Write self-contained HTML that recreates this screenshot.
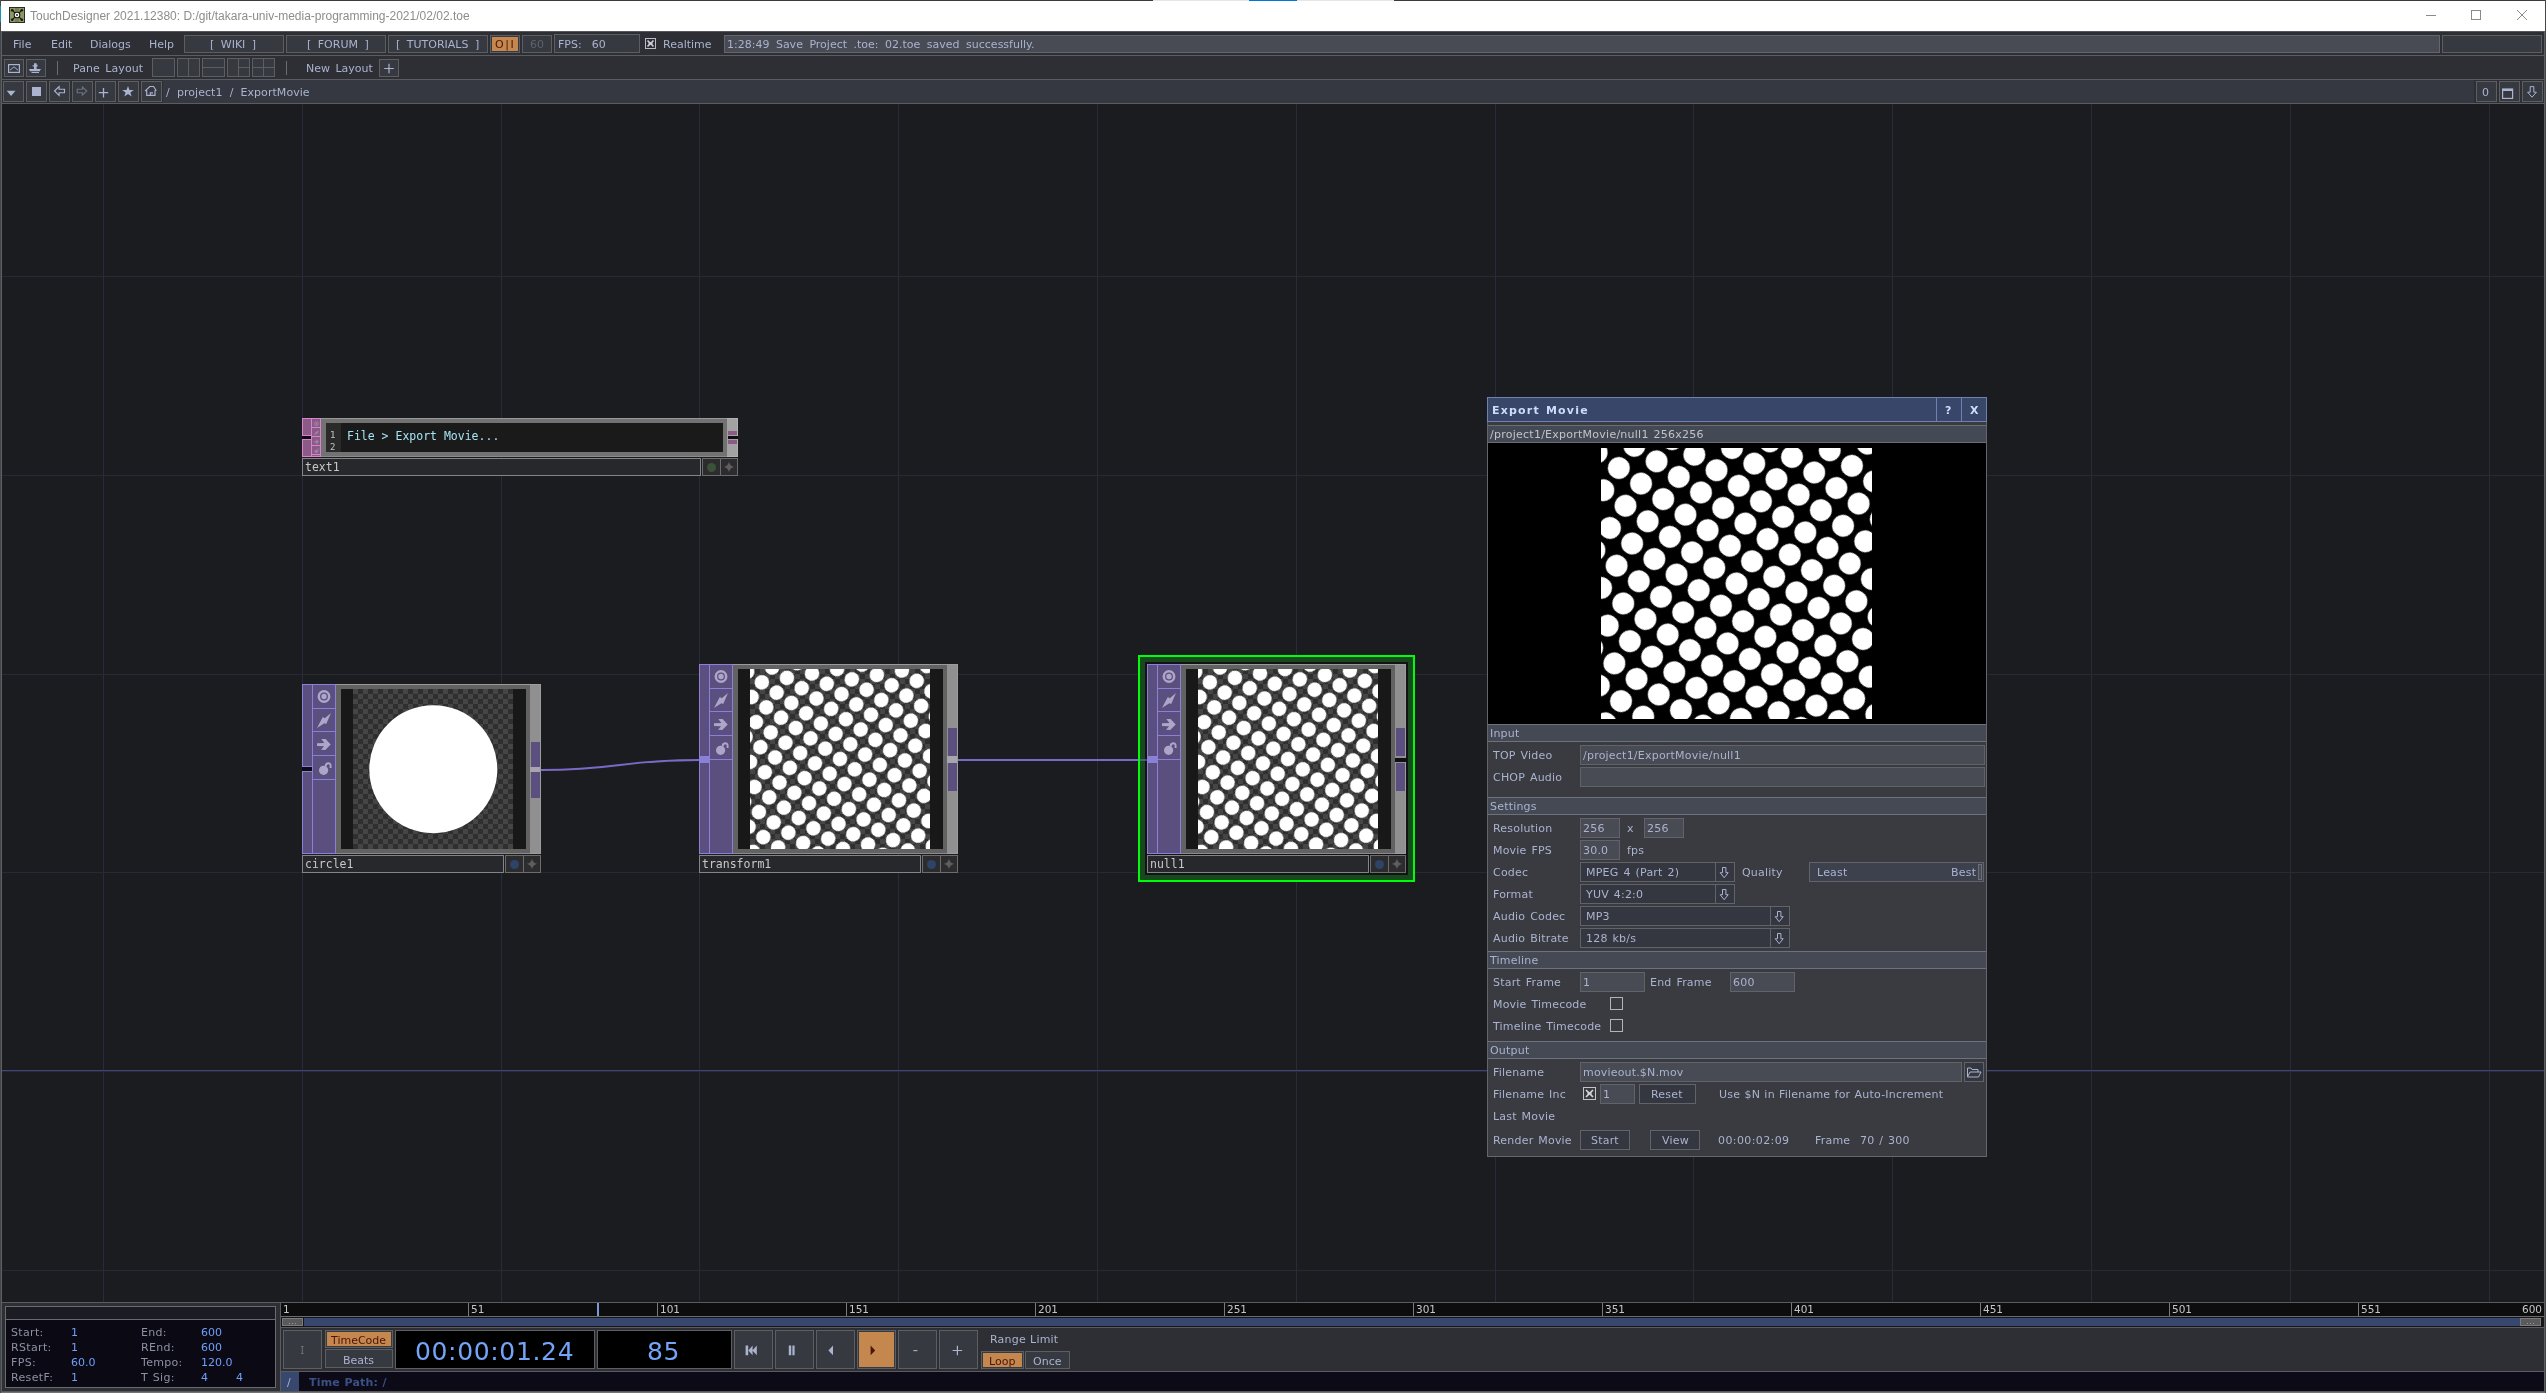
<!DOCTYPE html>
<html>
<head>
<meta charset="utf-8">
<title>TouchDesigner</title>
<style>
*{box-sizing:border-box;margin:0;padding:0}
html,body{width:2546px;height:1393px;overflow:hidden;background:#1b1c20}
body{position:relative;font-family:"DejaVu Sans","Liberation Sans",sans-serif;font-size:11px;line-height:13px;color:#aab3cf;word-spacing:3px}
.a{position:absolute}
.t{position:absolute;white-space:pre;height:13px}
.b{position:absolute;border:1px solid #5d5e61;background:#373941}
.hl{position:absolute;height:1px;left:1px;width:2544px;background:#5a5c61}
svg{position:absolute;overflow:visible}
.mono{font-family:"DejaVu Sans Mono","Liberation Mono",monospace;word-spacing:0}
</style>
</head>
<body>
<div id="root" style="position:absolute;left:0;top:0;width:2546px;height:1393px;will-change:transform">
<!-- ===== window frame / title bar ===== -->
<div class="a" id="titlebar" style="left:0;top:0;width:2546px;height:31px;background:#fff"></div>
<div class="a" style="left:0;top:0;width:2546px;height:1px;background:#3b3b3b"></div>
<div class="a" style="left:1153px;top:0;width:241px;height:1px;background:#e6e6e6"></div>
<div class="a" style="left:1249px;top:0;width:48px;height:1px;background:#0078d7"></div>
<div class="a" style="left:0;top:0;width:1px;height:1393px;background:#454746"></div>
<div class="a" style="left:2545px;top:0;width:1px;height:1393px;background:#454746"></div>
<div class="a" style="left:0;top:6px;width:1px;height:16px;background:#1d90b0"></div>
<div class="t" style="left:30px;top:9px;height:15px;line-height:15px;font-family:'Liberation Sans',sans-serif;font-size:12px;color:#8d8d8d;word-spacing:0">TouchDesigner 2021.12380: D:/git/takara-univ-media-programming-2021/02/02.toe</div>
<!-- app icon -->
<svg style="left:9px;top:7px" width="16" height="16" viewBox="0 0 16 16">
<rect x="0" y="0" width="16" height="16" fill="#8c9962"/>
<rect x="6" y="0" width="4" height="16" fill="#73804f"/>
<rect x="0.5" y="0.5" width="15" height="15" fill="none" stroke="#2a2a2a"/>
<path d="M3.2 3.2L12.8 12.8M12.8 3.2L3.2 12.8" stroke="#151515" stroke-width="1.2"/>
<circle cx="3.2" cy="3.2" r="1.3" fill="#151515"/><circle cx="12.8" cy="3.2" r="1.3" fill="#151515"/><circle cx="3.2" cy="12.8" r="1.3" fill="#151515"/><circle cx="12.8" cy="12.8" r="1.3" fill="#151515"/>
<circle cx="8" cy="8" r="3.3" fill="#151515"/><circle cx="8" cy="8" r="2.3" fill="#fff"/><circle cx="8" cy="8" r="0.9" fill="#151515"/>
</svg>
<!-- window controls -->
<svg style="left:2420px;top:5px" width="115" height="22" viewBox="0 0 115 22">
<path d="M6 10.5H16" stroke="#8a8a8a" stroke-width="1" fill="none"/>
<rect x="51.5" y="5.5" width="9" height="9" stroke="#8a8a8a" stroke-width="1" fill="none"/>
<path d="M97 5L107 15M107 5L97 15" stroke="#8a8a8a" stroke-width="1" fill="none"/>
</svg>

<!-- ===== menu bar ===== -->
<div class="a" id="appbg" style="left:1px;top:31px;width:2544px;height:73px;background:#2e2f34"></div>
<div class="a" style="left:1px;top:31px;width:2544px;height:1px;background:#54585e"></div>
<div class="a" style="left:1px;top:31px;width:1px;height:1362px;background:#5c5f66"></div>
<div class="a" style="left:2544px;top:31px;width:1px;height:1362px;background:#5c5f66"></div>
<div class="hl" style="top:55px"></div>
<div class="hl" style="top:79px"></div>
<div class="hl" style="top:103px"></div>
<!--MENUBAR-->
<div class="t" style="left:13px;top:38px">File</div>
<div class="t" style="left:51px;top:38px">Edit</div>
<div class="t" style="left:90px;top:38px">Dialogs</div>
<div class="t" style="left:149px;top:38px">Help</div>
<div class="b" style="left:184px;top:35px;width:100px;height:18px"></div>
<div class="b" style="left:286px;top:35px;width:100px;height:18px"></div>
<div class="b" style="left:388px;top:35px;width:100px;height:18px"></div>
<div class="t" style="left:210px;top:38px">[ WIKI ]</div>
<div class="t" style="left:307px;top:38px">[ FORUM ]</div>
<div class="t" style="left:396px;top:38px">[ TUTORIALS ]</div>
<div class="b" style="left:490px;top:35px;width:30px;height:18px"></div>
<div class="a" style="left:492px;top:37px;width:26px;height:14px;background:#c4874e"></div>
<div class="t" style="left:495px;top:38px;color:#4a1408;word-spacing:0;letter-spacing:1.6px">O|I</div>
<div class="b" style="left:522px;top:35px;width:30px;height:18px"></div>
<div class="t" style="left:530px;top:38px;color:#5f626c">60</div>
<div class="b" style="left:554px;top:34px;width:86px;height:19px"></div>
<div class="t" style="left:558px;top:38px;word-spacing:6.5px">FPS: 60</div>
<div class="a" style="left:645px;top:38px;width:11px;height:11px;border:1px solid #b9bcc4;background:#2e2f34"></div>
<svg style="left:645px;top:38px" width="11" height="11" viewBox="0 0 11 11"><path d="M2.5 2.5L8.5 8.5M8.5 2.5L2.5 8.5" stroke="#c9ccd6" stroke-width="1.6" fill="none"/><rect x="3.5" y="4" width="4" height="3" fill="#c9ccd6"/></svg>
<div class="t" style="left:663px;top:38px">Realtime</div>
<div class="b" style="left:724px;top:35px;width:1716px;height:18px;background:#484b54;border-color:#63666d"></div>
<div class="t" style="left:727px;top:38px">1:28:49 Save Project .toe: 02.toe saved successfully.</div>
<div class="b" style="left:2442px;top:35px;width:100px;height:18px"></div>
<!--/MENUBAR-->
<!--TOOLBAR-->
<div class="b" style="left:4px;top:59px;width:20px;height:18px"></div>
<div class="b" style="left:26px;top:59px;width:20px;height:18px"></div>
<svg style="left:4px;top:59px" width="42" height="18" viewBox="4 59 42 18" fill="none" stroke="#aab3cf">
<rect x="8.6" y="64.6" width="10.8" height="7.8" stroke-width="1.2"/>
<path d="M10 70.2L14 66.8L18 70.2" stroke-width="1"/>
<path d="M29 69h12l-1.5 2.2h-9.5z" fill="#aab3cf" stroke="none"/>
<path d="M34 63.2h2.6v1.6h1v1.6h-1v2.6h-2.6v-2.6h-1.4v-1.2h1.4z" fill="#aab3cf" stroke="none"/>
<path d="M31.5 72h7.5v1h-7.5z" fill="#aab3cf" stroke="none"/>
</svg>
<div class="a" style="left:57px;top:61px;width:1px;height:14px;background:#6a6c72"></div>
<div class="t" style="left:73px;top:62px;word-spacing:2px;letter-spacing:.05px">Pane Layout</div>
<div class="b" style="left:152px;top:58px;width:23px;height:19px"></div>
<div class="b" style="left:177px;top:58px;width:23px;height:19px"></div>
<div class="b" style="left:202px;top:58px;width:23px;height:19px"></div>
<div class="b" style="left:227px;top:58px;width:23px;height:19px"></div>
<div class="b" style="left:252px;top:58px;width:23px;height:19px"></div>
<div class="a" style="left:188px;top:59px;width:1px;height:17px;background:#5d5e61"></div>
<div class="a" style="left:203px;top:67px;width:21px;height:1px;background:#5d5e61"></div>
<div class="a" style="left:238px;top:59px;width:1px;height:17px;background:#5d5e61"></div>
<div class="a" style="left:239px;top:67px;width:10px;height:1px;background:#5d5e61"></div>
<div class="a" style="left:263px;top:59px;width:1px;height:17px;background:#5d5e61"></div>
<div class="a" style="left:253px;top:67px;width:21px;height:1px;background:#5d5e61"></div>
<div class="a" style="left:286px;top:61px;width:1px;height:14px;background:#6a6c72"></div>
<div class="t" style="left:306px;top:62px;word-spacing:2px">New Layout</div>
<div class="b" style="left:379px;top:59px;width:20px;height:18px"></div>
<svg style="left:379px;top:59px" width="20" height="18" viewBox="0 0 20 18"><path d="M5.2 9.5h9.6M10 4.7v9.6" stroke="#aab3cf" stroke-width="1.2" fill="none"/></svg>
<!--/TOOLBAR-->
<!--PATHBAR-->
<div class="a" style="left:163px;top:80px;width:2311px;height:23px;background:#353840"></div>
<div class="b" style="left:3px;top:81px;width:21px;height:21px"></div>
<div class="b" style="left:26px;top:81px;width:21px;height:21px"></div>
<div class="b" style="left:49px;top:81px;width:21px;height:21px"></div>
<div class="b" style="left:72px;top:81px;width:21px;height:21px"></div>
<div class="b" style="left:95px;top:81px;width:21px;height:21px"></div>
<div class="b" style="left:118px;top:81px;width:21px;height:21px"></div>
<div class="b" style="left:141px;top:81px;width:21px;height:21px"></div>
<svg style="left:3px;top:81px" width="160" height="21" viewBox="3 81 160 21" fill="none" stroke="#aab3cf" stroke-width="1.1">
<path d="M6.7 90.8h8.8l-4.4 5.3z" fill="#aab3cf" stroke="none"/>
<rect x="32" y="87" width="9" height="9" fill="#aab3cf" stroke="none"/>
<path d="M54.5 91l4.6-4.4v2.6h5.4v3.6h-5.4v2.6z"/>
<path d="M86.8 91l-4.4-4v2.3h-5.2v3.4h5.2v2.3z" stroke="#6d727f"/>
<path d="M98.8 92.6h9.4M103.5 88v9.6" stroke-width="1.3"/>
<path d="M128 86l1.5 3.9h4.3l-3.4 2.6 1.3 4.1-3.7-2.5-3.7 2.5 1.3-4.1-3.4-2.6h4.3z" fill="#aab3cf" stroke="none"/>
<path d="M145 91.2L149.8 86.5H153.6L156.3 90.8M146.7 90.2V95.4H155V90.2M150.3 95.4V92.9H153" stroke-width="1.15"/>
</svg>
<div class="t" style="left:166px;top:86px;word-spacing:3.6px;letter-spacing:.05px">/ project1 / ExportMovie</div>
<div class="b" style="left:2476px;top:81px;width:21px;height:21px"></div>
<div class="b" style="left:2499px;top:81px;width:21px;height:21px"></div>
<div class="b" style="left:2522px;top:81px;width:21px;height:21px"></div>
<div class="t" style="left:2482px;top:86px">0</div>
<svg style="left:2499px;top:81px" width="44" height="21" viewBox="2499 81 44 21" fill="none" stroke="#aab3cf" stroke-width="1.2">
<rect x="2502.6" y="89" width="10" height="9.4"/><path d="M2502.6 90h10" stroke-width="2"/>
<path d="M2530.2 86.6h3.6v5.6h2.6l-4.4 5-4.4-5h2.6z" stroke-width="1"/>
</svg>
<!--/PATHBAR-->
<!--NETWORK-->
<div class="a" id="net" style="left:2px;top:104px;width:2542px;height:1198px;background:#1b1c20;overflow:hidden"></div>
<div class="a" style="left:103px;top:104px;width:1px;height:1198px;background:#2a2b39"></div>
<div class="a" style="left:302px;top:104px;width:1px;height:1198px;background:#2a2b39"></div>
<div class="a" style="left:501px;top:104px;width:1px;height:1198px;background:#2a2b39"></div>
<div class="a" style="left:699px;top:104px;width:1px;height:1198px;background:#2a2b39"></div>
<div class="a" style="left:898px;top:104px;width:1px;height:1198px;background:#2a2b39"></div>
<div class="a" style="left:1097px;top:104px;width:1px;height:1198px;background:#2a2b39"></div>
<div class="a" style="left:1296px;top:104px;width:1px;height:1198px;background:#2a2b39"></div>
<div class="a" style="left:1495px;top:104px;width:1px;height:1198px;background:#2a2b39"></div>
<div class="a" style="left:1693px;top:104px;width:1px;height:1198px;background:#2a2b39"></div>
<div class="a" style="left:1892px;top:104px;width:1px;height:1198px;background:#2a2b39"></div>
<div class="a" style="left:2091px;top:104px;width:1px;height:1198px;background:#2a2b39"></div>
<div class="a" style="left:2290px;top:104px;width:1px;height:1198px;background:#2a2b39"></div>
<div class="a" style="left:2489px;top:104px;width:1px;height:1198px;background:#2a2b39"></div>
<div class="a" style="left:2px;top:276px;width:2542px;height:1px;background:#272a34"></div>
<div class="a" style="left:2px;top:475px;width:2542px;height:1px;background:#272a34"></div>
<div class="a" style="left:2px;top:674px;width:2542px;height:1px;background:#272a34"></div>
<div class="a" style="left:2px;top:872px;width:2542px;height:1px;background:#272a34"></div>
<div class="a" style="left:2px;top:1071px;width:2542px;height:1px;background:#272a34"></div>
<div class="a" style="left:2px;top:1270px;width:2542px;height:1px;background:#272a34"></div>
<div class="a" style="left:2px;top:1070px;width:2542px;height:1px;background:#40447c"></div>
<svg width="0" height="0" style="left:0;top:0"><defs>
<pattern id="chk" width="10" height="10" patternUnits="userSpaceOnUse"><rect width="10" height="10" fill="#2f2f2f"/><rect width="5" height="5" fill="#454545"/><rect x="5" y="5" width="5" height="5" fill="#454545"/></pattern>
<pattern id="dots" width="27.1" height="27.1" patternUnits="userSpaceOnUse" patternTransform="translate(135.5 135.5) rotate(35) translate(-13.55 -13.55)"><circle cx="13.55" cy="13.55" r="10.95" fill="#fff"/></pattern>
<g id="ic" fill="#aea6c8">
<circle cx="12" cy="12.5" r="5.2" fill="none" stroke="#aea6c8" stroke-width="2.5"/><circle cx="12" cy="12.5" r="2.7"/>
<path d="M19 29L14.2 40L12.3 39.2L5 43.9L10.8 33L12.8 34.3Z"/>
<path d="M9.3 54.9L13.6 55.1L18.7 60.5L13.3 66.1L9 65.8L12.1 62.3L5 62V59.2L12.4 58.9Z"/>
<circle cx="11.6" cy="86.3" r="4.6"/><path d="M13.6 82.5C13.6 78.6 18.6 78.2 18.6 81.6V84" fill="none" stroke="#aea6c8" stroke-width="1.9"/>
</g>
<g id="spark"><path d="M0 -5.2C.9 -2 2 -.9 5.2 0C2 .9 .9 2 0 5.2C-.9 2 -2 .9 -5.2 0C-2 -.9 -.9 -2 0 -5.2Z" fill="#5e5e5e"/></g>
</defs></svg>
<svg style="left:0;top:0" width="2546" height="1393" fill="none" stroke="#7a69c6" stroke-width="1.8"><path d="M541 770C620 770 620 760 699 760"/><path d="M958 760H1147"/></svg>
<div class="a" style="left:302px;top:418px;width:19px;height:39px;background:#8b5a86;border:1px solid #d884cc"></div>
<div class="a" style="left:311px;top:418px;width:1px;height:39px;background:#d884cc"></div>
<div class="a" style="left:311px;top:427px;width:10px;height:1px;background:#d884cc"></div>
<div class="a" style="left:311px;top:436px;width:10px;height:1px;background:#d884cc"></div>
<div class="a" style="left:311px;top:445px;width:10px;height:1px;background:#d884cc"></div>
<div class="a" style="left:311px;top:454px;width:10px;height:1px;background:#d884cc"></div>
<div class="a" style="left:302px;top:435px;width:9px;height:5px;background:#0c0c10;border-top:1px solid #d884cc;border-bottom:1px solid #d884cc"></div>
<svg style="left:312px;top:419px" width="9" height="36" viewBox="0 0 24 96"><use href="#ic" opacity=".55"/></svg>
<div class="a" style="left:321px;top:418px;width:406px;height:39px;background:#727272;border-top:1px solid #989898;border-bottom:1px solid #8a8a8a"></div>
<div class="a" style="left:326px;top:423px;width:397px;height:29px;background:#1a1a1a"></div>
<div class="a" style="left:326px;top:423px;width:15px;height:29px;background:#2a2a2a"></div>
<div class="t mono" style="left:330px;top:429px;font-size:9px;line-height:12px;color:#c4c4c4">1</div>
<div class="t mono" style="left:330px;top:441px;font-size:9px;line-height:12px;color:#c4c4c4">2</div>
<div class="t mono" style="left:347px;top:429px;font-size:11.5px;line-height:14px;height:14px;color:#a4e4f4">File &gt; Export Movie...</div>
<div class="a" style="left:727px;top:418px;width:11px;height:39px;background:#a2a2a2;border:1px solid #b0b0b0;border-left:none"></div>
<div class="a" style="left:728px;top:431px;width:9px;height:4px;background:#8b5a86"></div>
<div class="a" style="left:728px;top:440px;width:9px;height:4px;background:#8b5a86"></div>
<div class="a" style="left:728px;top:436px;width:10px;height:3px;background:#101014"></div>
<div class="a" style="left:302px;top:458px;width:399px;height:18px;background:#27282b;border:1px solid #828489"></div>
<div class="a" style="left:702px;top:458px;width:19px;height:18px;background:#2c2c2e;border:1px solid #6c6c6c"></div>
<div class="a" style="left:720px;top:458px;width:18px;height:18px;background:#2c2c2e;border:1px solid #6c6c6c"></div>
<div class="a" style="left:707px;top:463px;width:9px;height:9px;border-radius:50%;background:#3b5238"></div>
<svg style="left:729px;top:467px" width="1" height="1"><use href="#spark"/></svg>
<div class="t mono" style="left:305px;top:460px;font-size:11.5px;color:#c8c8c8;line-height:14px;height:14px">text1</div>
<div class="a" style="left:302px;top:684px;width:34px;height:170px;background:#5a4f7e;border:1px solid #8b80d8"></div>
<div class="a" style="left:312px;top:684px;width:1px;height:170px;background:#8b80d8"></div>
<div class="a" style="left:312px;top:708px;width:24px;height:1px;background:#8b80d8"></div>
<div class="a" style="left:312px;top:731px;width:24px;height:1px;background:#8b80d8"></div>
<div class="a" style="left:312px;top:755px;width:24px;height:1px;background:#8b80d8"></div>
<div class="a" style="left:312px;top:779px;width:24px;height:1px;background:#8b80d8"></div>
<div class="a" style="left:302px;top:766px;width:10px;height:6px;background:#0c0c10;border-top:1px solid #8b80d8;border-bottom:1px solid #8b80d8"></div>
<svg style="left:312px;top:684px" width="24" height="96" viewBox="0 0 24 96"><use href="#ic"/></svg>
<div class="a" style="left:336px;top:684px;width:194px;height:170px;background:#626262;border-top:1px solid #9a9a9a;border-bottom:1px solid #8a8a8a"></div>
<div class="a" style="left:341px;top:689px;width:185px;height:160px;background:#181818"></div>
<svg style="left:353px;top:689px" width="160" height="160"><rect width="160" height="160" fill="url(#chk)"/><circle cx="80.3" cy="80.2" r="64"  fill="#fff"/></svg>
<div class="a" style="left:530px;top:684px;width:11px;height:170px;background:#909090;border:1px solid #9c9c9c;border-left:none"></div>
<div class="a" style="left:531px;top:742px;width:9px;height:25px;background:#5a4f7e"></div>
<div class="a" style="left:531px;top:772px;width:9px;height:26px;background:#5a4f7e"></div>
<div class="a" style="left:530px;top:767px;width:10px;height:5px;background:#a6a6ac"></div>
<div class="a" style="left:302px;top:855px;width:202px;height:18px;background:#27282b;border:1px solid #828489"></div>
<div class="a" style="left:505px;top:855px;width:19px;height:18px;background:#2c2c2e;border:1px solid #6c6c6c"></div>
<div class="a" style="left:523px;top:855px;width:18px;height:18px;background:#2c2c2e;border:1px solid #6c6c6c"></div>
<div class="a" style="left:510px;top:860px;width:9px;height:9px;border-radius:50%;background:#2d4468"></div>
<svg style="left:532px;top:864px" width="1" height="1"><use href="#spark"/></svg>
<div class="t mono" style="left:305px;top:857px;font-size:11.5px;color:#c8c8c8;line-height:14px;height:14px">circle1</div>
<div class="a" style="left:699px;top:664px;width:34px;height:190px;background:#5a4f7e;border:1px solid #8b80d8"></div>
<div class="a" style="left:709px;top:664px;width:1px;height:190px;background:#8b80d8"></div>
<div class="a" style="left:709px;top:688px;width:24px;height:1px;background:#8b80d8"></div>
<div class="a" style="left:709px;top:711px;width:24px;height:1px;background:#8b80d8"></div>
<div class="a" style="left:709px;top:735px;width:24px;height:1px;background:#8b80d8"></div>
<div class="a" style="left:709px;top:759px;width:24px;height:1px;background:#8b80d8"></div>
<div class="a" style="left:699px;top:756px;width:10px;height:7px;background:#8b80d8"></div>
<svg style="left:709px;top:664px" width="24" height="96" viewBox="0 0 24 96"><use href="#ic"/></svg>
<div class="a" style="left:733px;top:664px;width:214px;height:190px;background:#626262;border-top:1px solid #9a9a9a;border-bottom:1px solid #8a8a8a"></div>
<div class="a" style="left:738px;top:669px;width:205px;height:180px;background:#181818"></div>
<svg style="left:750px;top:669px;overflow:hidden" width="180" height="180"><rect width="180" height="180" fill="url(#chk)"/><g transform="scale(0.66421)"><rect width="271" height="271" fill="url(#dots)"/></g></svg>
<div class="a" style="left:947px;top:664px;width:11px;height:190px;background:#909090;border:1px solid #9c9c9c;border-left:none"></div>
<div class="a" style="left:948px;top:728px;width:9px;height:28px;background:#5a4f7e"></div>
<div class="a" style="left:948px;top:763px;width:9px;height:28px;background:#5a4f7e"></div>
<div class="a" style="left:947px;top:756px;width:10px;height:7px;background:#a6a6ac"></div>
<div class="a" style="left:699px;top:855px;width:222px;height:18px;background:#27282b;border:1px solid #828489"></div>
<div class="a" style="left:922px;top:855px;width:19px;height:18px;background:#2c2c2e;border:1px solid #6c6c6c"></div>
<div class="a" style="left:940px;top:855px;width:18px;height:18px;background:#2c2c2e;border:1px solid #6c6c6c"></div>
<div class="a" style="left:927px;top:860px;width:9px;height:9px;border-radius:50%;background:#2d4468"></div>
<svg style="left:949px;top:864px" width="1" height="1"><use href="#spark"/></svg>
<div class="t mono" style="left:702px;top:857px;font-size:11.5px;color:#c8c8c8;line-height:14px;height:14px">transform1</div>
<div class="a" style="left:1138px;top:655px;width:277px;height:227px;background:#131315;border:2px solid #00fb0c;box-shadow:inset 0 0 0 5px #164a1c"></div>
<div class="a" style="left:1140px;top:759px;width:7px;height:2px;background:rgba(130,115,200,.55)"></div>
<div class="a" style="left:1147px;top:664px;width:34px;height:190px;background:#5a4f7e;border:1px solid #8b80d8"></div>
<div class="a" style="left:1157px;top:664px;width:1px;height:190px;background:#8b80d8"></div>
<div class="a" style="left:1157px;top:688px;width:24px;height:1px;background:#8b80d8"></div>
<div class="a" style="left:1157px;top:711px;width:24px;height:1px;background:#8b80d8"></div>
<div class="a" style="left:1157px;top:735px;width:24px;height:1px;background:#8b80d8"></div>
<div class="a" style="left:1157px;top:759px;width:24px;height:1px;background:#8b80d8"></div>
<div class="a" style="left:1147px;top:756px;width:10px;height:7px;background:#8b80d8"></div>
<svg style="left:1157px;top:664px" width="24" height="96" viewBox="0 0 24 96"><use href="#ic"/></svg>
<div class="a" style="left:1181px;top:664px;width:214px;height:190px;background:#626262;border-top:1px solid #9a9a9a;border-bottom:1px solid #8a8a8a"></div>
<div class="a" style="left:1186px;top:669px;width:205px;height:180px;background:#181818"></div>
<svg style="left:1198px;top:669px;overflow:hidden" width="180" height="180"><rect width="180" height="180" fill="url(#chk)"/><g transform="scale(0.66421)"><rect width="271" height="271" fill="url(#dots)"/></g></svg>
<div class="a" style="left:1395px;top:664px;width:11px;height:190px;background:#909090;border:1px solid #9c9c9c;border-left:none"></div>
<div class="a" style="left:1396px;top:728px;width:9px;height:28px;background:#5a4f7e"></div>
<div class="a" style="left:1396px;top:763px;width:9px;height:28px;background:#5a4f7e"></div>
<div class="a" style="left:1395px;top:758px;width:11px;height:4px;background:#101014"></div>
<div class="a" style="left:1147px;top:855px;width:222px;height:18px;background:#27282b;border:1px solid #828489"></div>
<div class="a" style="left:1370px;top:855px;width:19px;height:18px;background:#2c2c2e;border:1px solid #6c6c6c"></div>
<div class="a" style="left:1388px;top:855px;width:18px;height:18px;background:#2c2c2e;border:1px solid #6c6c6c"></div>
<div class="a" style="left:1375px;top:860px;width:9px;height:9px;border-radius:50%;background:#2d4468"></div>
<svg style="left:1397px;top:864px" width="1" height="1"><use href="#spark"/></svg>
<div class="t mono" style="left:1150px;top:857px;font-size:11.5px;color:#c8c8c8;line-height:14px;height:14px">null1</div>
<!--/NETWORK-->
<!--DIALOG-->
<div class="a" id="dlg" style="left:1487px;top:397px;width:500px;height:760px;background:#3a3b40;border:1px solid #63666c"></div>
<div class="a" style="left:1487px;top:397px;width:500px;height:25px;background:#374669;border:1px solid #6d82b3"></div>
<div class="a" style="left:1936px;top:398px;width:1px;height:23px;background:#6d82b3"></div>
<div class="a" style="left:1961px;top:398px;width:1px;height:23px;background:#6d82b3"></div>
<div class="t" style="left:1492px;top:404px;font-weight:bold;letter-spacing:1.2px;word-spacing:1px;color:#cfdcfa">Export Movie</div>
<div class="t" style="left:1945px;top:404px;font-weight:bold;color:#cfdcfa">?</div>
<div class="t" style="left:1970px;top:404px;font-weight:bold;color:#cfdcfa">X</div>
<div class="a" style="left:1488px;top:425px;width:498px;height:18px;background:#444a55;border-top:1px solid #6c6e73;border-bottom:1px solid #6c6e73"></div>
<div class="t" style="left:1490px;top:428px;letter-spacing:.2px;word-spacing:1.2px;letter-spacing:.25px;word-spacing:1px;color:#c2c3c8">/project1/ExportMovie/null1 256x256</div>
<div class="a" style="left:1488px;top:443px;width:498px;height:281px;background:#000"></div>
<svg style="left:1601px;top:448px" width="271" height="271"><rect width="271" height="271" fill="#000"/><rect width="271" height="271" fill="url(#dots)"/></svg>
<div class="a" style="left:1488px;top:724px;width:498px;height:18px;background:#444954;border-top:1px solid #6d717b;border-bottom:1px solid #6d717b"></div>
<div class="t" style="left:1490px;top:727px;letter-spacing:.2px;word-spacing:1.2px;">Input</div>
<div class="t" style="left:1493px;top:749px;letter-spacing:.2px;word-spacing:1.2px;">TOP Video</div>
<div class="b" style="left:1580px;top:745px;width:405px;height:20px;background:#484b54;border-color:#60636a"></div>
<div class="t" style="left:1583px;top:749px;letter-spacing:.2px;word-spacing:1.2px;letter-spacing:.22px">/project1/ExportMovie/null1</div>
<div class="t" style="left:1493px;top:771px;letter-spacing:.2px;word-spacing:1.2px;">CHOP Audio</div>
<div class="b" style="left:1580px;top:767px;width:405px;height:20px;background:#484b54;border-color:#60636a"></div>
<div class="a" style="left:1488px;top:797px;width:498px;height:18px;background:#444954;border-top:1px solid #6d717b;border-bottom:1px solid #6d717b"></div>
<div class="t" style="left:1490px;top:800px;letter-spacing:.2px;word-spacing:1.2px;">Settings</div>
<div class="t" style="left:1493px;top:822px;letter-spacing:.2px;word-spacing:1.2px;">Resolution</div>
<div class="b" style="left:1580px;top:818px;width:40px;height:20px;background:#484b54;border-color:#60636a"></div>
<div class="t" style="left:1583px;top:822px;letter-spacing:.2px;word-spacing:1.2px;">256</div>
<div class="t" style="left:1627px;top:822px;letter-spacing:.2px;word-spacing:1.2px;">x</div>
<div class="b" style="left:1644px;top:818px;width:40px;height:20px;background:#484b54;border-color:#60636a"></div>
<div class="t" style="left:1647px;top:822px;letter-spacing:.2px;word-spacing:1.2px;">256</div>
<div class="t" style="left:1493px;top:844px;letter-spacing:.2px;word-spacing:1.2px;">Movie FPS</div>
<div class="b" style="left:1580px;top:840px;width:40px;height:20px;background:#484b54;border-color:#60636a"></div>
<div class="t" style="left:1583px;top:844px;letter-spacing:.2px;word-spacing:1.2px;">30.0</div>
<div class="t" style="left:1627px;top:844px;letter-spacing:.2px;word-spacing:1.2px;">fps</div>
<div class="t" style="left:1493px;top:866px;letter-spacing:.2px;word-spacing:1.2px;">Codec</div>
<div class="b" style="left:1580px;top:862px;width:155px;height:20px;background:#353740;border-color:#60636a"></div>
<div class="a" style="left:1715px;top:863px;width:1px;height:18px;background:#60636a"></div>
<svg style="left:1715px;top:862px" width="19" height="20" viewBox="0 0 19 20"><path d="M7.5 5.5h3.4v5.2h2.3l-4 5-4-5h2.3z" fill="none" stroke="#aab3cf" stroke-width="1"/></svg>
<div class="t" style="left:1586px;top:866px;letter-spacing:.2px;word-spacing:1.2px;word-spacing:1.3px">MPEG 4 (Part 2)</div>
<div class="t" style="left:1742px;top:866px;letter-spacing:.2px;word-spacing:1.2px;">Quality</div>
<div class="b" style="left:1809px;top:862px;width:175px;height:20px;background:#3c414d;border-color:#60636a"></div>
<div class="t" style="left:1817px;top:866px;letter-spacing:.2px;word-spacing:1.2px;">Least</div>
<div class="t" style="left:1951px;top:866px;letter-spacing:.2px;word-spacing:1.2px;">Best</div>
<div class="a" style="left:1978px;top:864px;width:4px;height:16px;background:#4a4d57;border:1px solid #6c6f77"></div>
<div class="t" style="left:1493px;top:888px;letter-spacing:.2px;word-spacing:1.2px;">Format</div>
<div class="b" style="left:1580px;top:884px;width:155px;height:20px;background:#353740;border-color:#60636a"></div>
<div class="a" style="left:1715px;top:885px;width:1px;height:18px;background:#60636a"></div>
<svg style="left:1715px;top:884px" width="19" height="20" viewBox="0 0 19 20"><path d="M7.5 5.5h3.4v5.2h2.3l-4 5-4-5h2.3z" fill="none" stroke="#aab3cf" stroke-width="1"/></svg>
<div class="t" style="left:1586px;top:888px;letter-spacing:.2px;word-spacing:1.2px;">YUV 4:2:0</div>
<div class="t" style="left:1493px;top:910px;letter-spacing:.2px;word-spacing:1.2px;">Audio Codec</div>
<div class="b" style="left:1580px;top:906px;width:210px;height:20px;background:#353740;border-color:#60636a"></div>
<div class="a" style="left:1770px;top:907px;width:1px;height:18px;background:#60636a"></div>
<svg style="left:1770px;top:906px" width="19" height="20" viewBox="0 0 19 20"><path d="M7.5 5.5h3.4v5.2h2.3l-4 5-4-5h2.3z" fill="none" stroke="#aab3cf" stroke-width="1"/></svg>
<div class="t" style="left:1586px;top:910px;letter-spacing:.2px;word-spacing:1.2px;">MP3</div>
<div class="t" style="left:1493px;top:932px;letter-spacing:.2px;word-spacing:1.2px;">Audio Bitrate</div>
<div class="b" style="left:1580px;top:928px;width:210px;height:20px;background:#353740;border-color:#60636a"></div>
<div class="a" style="left:1770px;top:929px;width:1px;height:18px;background:#60636a"></div>
<svg style="left:1770px;top:928px" width="19" height="20" viewBox="0 0 19 20"><path d="M7.5 5.5h3.4v5.2h2.3l-4 5-4-5h2.3z" fill="none" stroke="#aab3cf" stroke-width="1"/></svg>
<div class="t" style="left:1586px;top:932px;letter-spacing:.2px;word-spacing:1.2px;">128 kb/s</div>
<div class="a" style="left:1488px;top:951px;width:498px;height:18px;background:#444954;border-top:1px solid #6d717b;border-bottom:1px solid #6d717b"></div>
<div class="t" style="left:1490px;top:954px;letter-spacing:.2px;word-spacing:1.2px;">Timeline</div>
<div class="t" style="left:1493px;top:976px;letter-spacing:.2px;word-spacing:1.2px;">Start Frame</div>
<div class="b" style="left:1580px;top:972px;width:65px;height:20px;background:#484b54;border-color:#60636a"></div>
<div class="t" style="left:1583px;top:976px;letter-spacing:.2px;word-spacing:1.2px;">1</div>
<div class="t" style="left:1650px;top:976px;letter-spacing:.2px;word-spacing:1.2px;">End Frame</div>
<div class="b" style="left:1730px;top:972px;width:65px;height:20px;background:#484b54;border-color:#60636a"></div>
<div class="t" style="left:1733px;top:976px;letter-spacing:.2px;word-spacing:1.2px;">600</div>
<div class="t" style="left:1493px;top:998px;letter-spacing:.2px;word-spacing:1.2px;">Movie Timecode</div>
<div class="a" style="left:1610px;top:997px;width:13px;height:13px;border:1px solid #b4b4b8"></div>
<div class="t" style="left:1493px;top:1020px;letter-spacing:.2px;word-spacing:1.2px;">Timeline Timecode</div>
<div class="a" style="left:1610px;top:1019px;width:13px;height:13px;border:1px solid #b4b4b8"></div>
<div class="a" style="left:1488px;top:1041px;width:498px;height:18px;background:#444954;border-top:1px solid #6d717b;border-bottom:1px solid #6d717b"></div>
<div class="t" style="left:1490px;top:1044px;letter-spacing:.2px;word-spacing:1.2px;">Output</div>
<div class="t" style="left:1493px;top:1066px;letter-spacing:.2px;word-spacing:1.2px;">Filename</div>
<div class="b" style="left:1580px;top:1062px;width:382px;height:20px;background:#484b54;border-color:#60636a"></div>
<div class="t" style="left:1583px;top:1066px;letter-spacing:.2px;word-spacing:1.2px;letter-spacing:.17px">movieout.$N.mov</div>
<div class="b" style="left:1964px;top:1062px;width:20px;height:20px;background:#353740;border-color:#60636a"></div>
<svg style="left:1964px;top:1062px" width="20" height="20" viewBox="0 0 20 20" fill="none" stroke="#aab3cf" stroke-width="1"><path d="M3.5 15v-9h3.5l1 1.5h6v2.5M3.5 15l2.5-5h11l-2.5 5z"/></svg>
<div class="t" style="left:1493px;top:1088px;letter-spacing:.2px;word-spacing:1.2px;">Filename Inc</div>
<div class="a" style="left:1583px;top:1087px;width:13px;height:13px;border:1px solid #c2c4cc"></div>
<svg style="left:1583px;top:1087px" width="13" height="13" viewBox="0 0 13 13"><path d="M3 3L10 10M10 3L3 10" stroke="#d0d3dc" stroke-width="1.7" fill="none"/><rect x="4.5" y="5" width="4" height="3" fill="#d0d3dc"/></svg>
<div class="b" style="left:1600px;top:1084px;width:35px;height:20px;background:#484b54;border-color:#60636a"></div>
<div class="t" style="left:1603px;top:1088px;letter-spacing:.2px;word-spacing:1.2px;">1</div>
<div class="b" style="left:1639px;top:1084px;width:57px;height:20px;background:#353740;border-color:#60636a"></div>
<div class="t" style="left:1651px;top:1088px;letter-spacing:.2px;word-spacing:1.2px;">Reset</div>
<div class="t" style="left:1719px;top:1088px;letter-spacing:.2px;word-spacing:1.2px;word-spacing:.6px">Use $N in Filename for Auto-Increment</div>
<div class="t" style="left:1493px;top:1110px;letter-spacing:.2px;word-spacing:1.2px;">Last Movie</div>
<div class="t" style="left:1493px;top:1134px;letter-spacing:.2px;word-spacing:1.2px;">Render Movie</div>
<div class="b" style="left:1580px;top:1130px;width:50px;height:20px;background:#353740;border-color:#60636a"></div>
<div class="t" style="left:1591px;top:1134px;letter-spacing:.2px;word-spacing:1.2px;">Start</div>
<div class="b" style="left:1650px;top:1130px;width:50px;height:20px;background:#353740;border-color:#60636a"></div>
<div class="t" style="left:1662px;top:1134px;letter-spacing:.2px;word-spacing:1.2px;">View</div>
<div class="t" style="left:1718px;top:1134px;letter-spacing:.2px;word-spacing:1.2px;letter-spacing:.4px">00:00:02:09</div>
<div class="t" style="left:1815px;top:1134px;letter-spacing:.2px;word-spacing:1.2px;">Frame</div>
<div class="t" style="left:1860px;top:1134px;letter-spacing:.2px;word-spacing:1.2px;word-spacing:1.2px">70 / 300</div>
<!--/DIALOG-->
<!--TIMELINE-->
<div class="a" id="tl" style="left:2px;top:1302px;width:2542px;height:91px;background:#2e2f34;border-top:1px solid #5a5c61"></div>
<div class="a" style="left:5px;top:1306px;width:271px;height:82px;background:#0b0914;border:1px solid #6a6b6e"></div>
<div class="a" style="left:6px;top:1307px;width:269px;height:13px;background:#1c1d24;border-bottom:1px solid #6a6b6e"></div>
<div class="t" style="left:11px;top:1326px;color:#8d90a2;letter-spacing:.35px">Start:</div>
<div class="t" style="left:71px;top:1326px;color:#6f9ffa">1</div>
<div class="t" style="left:141px;top:1326px;color:#8d90a2;word-spacing:1px;letter-spacing:.3px">End:</div>
<div class="t" style="left:201px;top:1326px;color:#6f9ffa">600</div>
<div class="t" style="left:11px;top:1341px;color:#8d90a2;letter-spacing:.35px">RStart:</div>
<div class="t" style="left:71px;top:1341px;color:#6f9ffa">1</div>
<div class="t" style="left:141px;top:1341px;color:#8d90a2;word-spacing:1px;letter-spacing:.3px">REnd:</div>
<div class="t" style="left:201px;top:1341px;color:#6f9ffa">600</div>
<div class="t" style="left:11px;top:1356px;color:#8d90a2;letter-spacing:.35px">FPS:</div>
<div class="t" style="left:71px;top:1356px;color:#6f9ffa">60.0</div>
<div class="t" style="left:141px;top:1356px;color:#8d90a2;word-spacing:1px;letter-spacing:.3px">Tempo:</div>
<div class="t" style="left:201px;top:1356px;color:#6f9ffa">120.0</div>
<div class="t" style="left:11px;top:1371px;color:#8d90a2;letter-spacing:.35px">ResetF:</div>
<div class="t" style="left:71px;top:1371px;color:#6f9ffa">1</div>
<div class="t" style="left:141px;top:1371px;color:#8d90a2;word-spacing:1px;letter-spacing:.3px">T Sig:</div>
<div class="t" style="left:201px;top:1371px;color:#6f9ffa">4</div>
<div class="t" style="left:236px;top:1371px;color:#6f9ffa">4</div>
<div class="a" style="left:280px;top:1303px;width:1px;height:88px;background:#5a5c61"></div>
<div class="a" style="left:281px;top:1303px;width:2263px;height:14px;background:#0d0d0d;border-bottom:1px solid #6a6b6e"></div>
<div class="a" style="left:468px;top:1303px;width:1px;height:13px;background:#7a7a7a"></div>
<div class="t" style="left:471px;top:1303px;color:#c6c6c6;font-size:10.5px">51</div>
<div class="a" style="left:657px;top:1303px;width:1px;height:13px;background:#7a7a7a"></div>
<div class="t" style="left:660px;top:1303px;color:#c6c6c6;font-size:10.5px">101</div>
<div class="a" style="left:846px;top:1303px;width:1px;height:13px;background:#7a7a7a"></div>
<div class="t" style="left:849px;top:1303px;color:#c6c6c6;font-size:10.5px">151</div>
<div class="a" style="left:1035px;top:1303px;width:1px;height:13px;background:#7a7a7a"></div>
<div class="t" style="left:1038px;top:1303px;color:#c6c6c6;font-size:10.5px">201</div>
<div class="a" style="left:1224px;top:1303px;width:1px;height:13px;background:#7a7a7a"></div>
<div class="t" style="left:1227px;top:1303px;color:#c6c6c6;font-size:10.5px">251</div>
<div class="a" style="left:1413px;top:1303px;width:1px;height:13px;background:#7a7a7a"></div>
<div class="t" style="left:1416px;top:1303px;color:#c6c6c6;font-size:10.5px">301</div>
<div class="a" style="left:1602px;top:1303px;width:1px;height:13px;background:#7a7a7a"></div>
<div class="t" style="left:1605px;top:1303px;color:#c6c6c6;font-size:10.5px">351</div>
<div class="a" style="left:1791px;top:1303px;width:1px;height:13px;background:#7a7a7a"></div>
<div class="t" style="left:1794px;top:1303px;color:#c6c6c6;font-size:10.5px">401</div>
<div class="a" style="left:1980px;top:1303px;width:1px;height:13px;background:#7a7a7a"></div>
<div class="t" style="left:1983px;top:1303px;color:#c6c6c6;font-size:10.5px">451</div>
<div class="a" style="left:2169px;top:1303px;width:1px;height:13px;background:#7a7a7a"></div>
<div class="t" style="left:2172px;top:1303px;color:#c6c6c6;font-size:10.5px">501</div>
<div class="a" style="left:2358px;top:1303px;width:1px;height:13px;background:#7a7a7a"></div>
<div class="t" style="left:2361px;top:1303px;color:#c6c6c6;font-size:10.5px">551</div>
<div class="t" style="left:283px;top:1303px;color:#c6c6c6;font-size:10.5px">1</div>
<div class="t" style="left:2500px;width:42px;text-align:right;top:1303px;color:#c6c6c6;font-size:10.5px">600</div>
<div class="a" style="left:597px;top:1303px;width:2px;height:13px;background:#7d97d8"></div>
<div class="a" style="left:281px;top:1317px;width:2263px;height:11px;background:#16161a;border-bottom:1px solid #5a5c61"></div>
<div class="a" style="left:304px;top:1318px;width:2216px;height:8px;background:#38476e"></div>
<div class="a" style="left:282px;top:1318px;width:21px;height:8px;background:#5a5a5a;border:1px solid #7c7c7c"></div>
<div class="a" style="left:292px;top:1323px;width:1px;height:1px;background:#9a9a9a;box-shadow:3px 0 #9a9a9a,-3px 0 #9a9a9a"></div>
<div class="a" style="left:2520px;top:1318px;width:21px;height:8px;background:#5a5a5a;border:1px solid #7c7c7c"></div>
<div class="a" style="left:2530px;top:1323px;width:1px;height:1px;background:#9a9a9a;box-shadow:3px 0 #9a9a9a,-3px 0 #9a9a9a"></div>
<div class="b" style="left:283px;top:1330px;width:39px;height:39px;background:#373941"></div>
<svg style="left:283px;top:1330px" width="39" height="39" viewBox="0 0 39 39"><path d="M18 16.5h2.6M19.3 16.5v7M18 23.5h2.6" stroke="#6f727c" stroke-width="1" fill="none"/></svg>
<div class="b" style="left:325px;top:1330px;width:68px;height:18px;background:#373941"></div>
<div class="a" style="left:327px;top:1332px;width:64px;height:14px;background:#c4874e"></div>
<div class="t" style="left:331px;top:1334px;color:#4e140a">TimeCode</div>
<div class="b" style="left:325px;top:1349px;width:68px;height:19px;background:#373941"></div>
<div class="t" style="left:343px;top:1354px;">Beats</div>
<div class="b" style="left:395px;top:1330px;width:200px;height:39px;background:#000"></div>
<div class="t" style="left:415px;top:1336px;height:32px;line-height:32px;font-size:25px;letter-spacing:.65px;color:#74a4f8">00:00:01.24</div>
<div class="b" style="left:597px;top:1330px;width:135px;height:39px;background:#000"></div>
<div class="t" style="left:647px;top:1336px;height:32px;line-height:32px;font-size:25px;letter-spacing:.65px;color:#74a4f8">85</div>
<div class="b" style="left:734px;top:1330px;width:39px;height:39px;background:#373941"></div>
<div class="b" style="left:775px;top:1330px;width:39px;height:39px;background:#373941"></div>
<div class="b" style="left:816px;top:1330px;width:39px;height:39px;background:#373941"></div>
<div class="b" style="left:857px;top:1330px;width:39px;height:39px;background:#373941"></div>
<div class="b" style="left:898px;top:1330px;width:39px;height:39px;background:#373941"></div>
<div class="b" style="left:939px;top:1330px;width:39px;height:39px;background:#373941"></div>
<div class="a" style="left:859px;top:1332px;width:35px;height:35px;background:#c4874e"></div>
<svg style="left:734px;top:1330px" width="244" height="39" viewBox="734 1330 244 39" fill="#aab3cf">
<path d="M745.6 1345.6h2.6v9.6h-2.6zM748.4 1350.4l4.2-4.8v9.6zM752.4 1350.4l4.4-4.8v9.6z"/>
<path d="M788.8 1345.6h2.4v9.6h-2.4zM792.4 1345.6h2.2v9.6h-2.2z"/>
<path d="M828.4 1350.4l4.6-4.8v9.6z"/>
<path d="M875.2 1350.4l-4.6-4.8v9.6z" fill="#4e140a"/>
<path d="M913.4 1350.6h4" stroke="#aab3cf" stroke-width="1.1"/>
<path d="M952.6 1350.5h9.6M957.4 1345.7v9.6" stroke="#aab3cf" stroke-width="1.2"/>
</svg>
<div class="t" style="left:990px;top:1333px;word-spacing:.5px;letter-spacing:.2px">Range Limit</div>
<div class="b" style="left:981px;top:1351px;width:43px;height:18px;background:#373941"></div>
<div class="a" style="left:983px;top:1353px;width:39px;height:14px;background:#c4874e"></div>
<div class="t" style="left:989px;top:1355px;color:#4e140a">Loop</div>
<div class="b" style="left:1025px;top:1351px;width:45px;height:18px;background:#373941"></div>
<div class="t" style="left:1033px;top:1355px;">Once</div>
<div class="a" style="left:281px;top:1371px;width:2263px;height:20px;background:#0c0a16;border-top:1px solid #5a5c61"></div>
<div class="a" style="left:281px;top:1372px;width:18px;height:19px;background:#38476e"></div>
<div class="t" style="left:287px;top:1376px;">/</div>
<div class="t" style="left:309px;top:1376px;font-weight:bold;color:#3c5088;word-spacing:.4px;letter-spacing:.2px">Time Path: /</div>
<div class="a" style="left:1px;top:1391px;width:2544px;height:1px;background:#56585c"></div>
<div class="a" style="left:1px;top:1392px;width:2544px;height:1px;background:#77736e"></div>
<!--/TIMELINE-->
</div>
</body>
</html>
